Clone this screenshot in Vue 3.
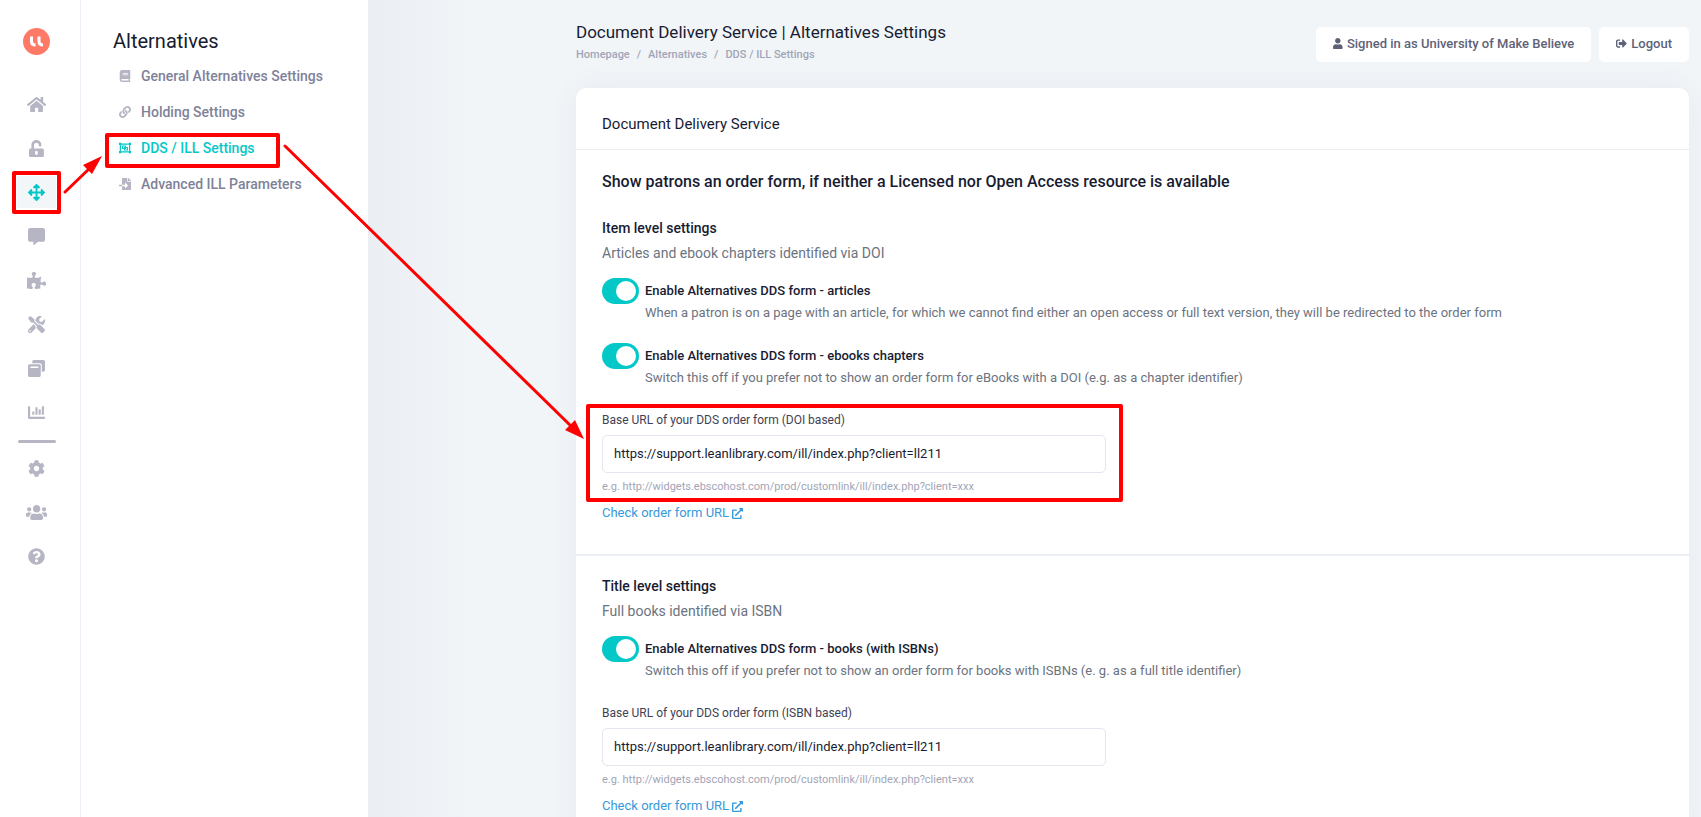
<script setup>
import { ref } from 'vue'

const railItems = [
    { name: 'Home', icon: 'home' },
    { name: 'Access', icon: 'unlock' },
    { name: 'Alternatives', icon: 'arrows', active: true },
    { name: 'Messages', icon: 'comment' },
    { name: 'Extensions', icon: 'puzzle' },
    { name: 'Tools', icon: 'tools' },
    { name: 'Collections', icon: 'books' },
    { name: 'Statistics', icon: 'chart' },
]

const railBottom = [
    { name: 'Settings', icon: 'cog' },
    { name: 'Users', icon: 'users' },
    { name: 'Help', icon: 'question' },
]

const menu = [
    { label: 'General Alternatives Settings', icon: 'book' },
    { label: 'Holding Settings', icon: 'link' },
    { label: 'DDS / ILL Settings', icon: 'group', active: true },
    { label: 'Advanced ILL Parameters', icon: 'import' },
]

const icons = {
    home: { box: '0 0 576 512', d: 'M280.37 148.26L96 300.11V464a16 16 0 0 0 16 16l112.06-.29a16 16 0 0 0 15.92-16V368a16 16 0 0 1 16-16h64a16 16 0 0 1 16 16v95.64a16 16 0 0 0 16 16.05L464 480a16 16 0 0 0 16-16V300L295.67 148.26a12.19 12.19 0 0 0-15.3 0zM571.6 251.47L488 182.56V44.05a12 12 0 0 0-12-12h-56a12 12 0 0 0-12 12v72.61L318.47 43a48 48 0 0 0-61 0L4.34 251.47a12 12 0 0 0-1.6 16.9l25.5 31A12 12 0 0 0 45.15 301l235.22-193.74a12.19 12.19 0 0 1 15.3 0L530.9 301a12 12 0 0 0 16.9-1.6l25.5-31a12 12 0 0 0-1.7-16.93z' },
    unlock: { box: '0 0 448 512', d: 'M400 256H152V152.9c0-39.6 31.7-72.5 71.3-72.9 40-.4 72.7 32.1 72.7 72v16c0 13.3 10.7 24 24 24h32c13.3 0 24-10.7 24-24v-16C376 68 307.5-.3 223.5 0 139.5.3 72 69.5 72 153.5V256H48c-26.5 0-48 21.5-48 48v160c0 26.5 21.5 48 48 48h352c26.5 0 48-21.5 48-48V304c0-26.5-21.5-48-48-48zM264 408c0 22.1-17.9 40-40 40s-40-17.9-40-40v-48c0-22.1 17.9-40 40-40s40 17.9 40 40v48z' },
    arrows: { box: '0 0 512 512', d: 'M352.2 425.8l-79.2 79.2c-9.4 9.4-24.6 9.4-33.9 0l-79.2-79.2c-15.1-15.1-4.4-41 17-41h51.1L228 284H127.2v51.2c0 21.4-25.9 32.1-41 17L7 272.9c-9.4-9.4-9.4-24.6 0-33.9l79.2-79.2c15.1-15.1 41-4.4 41 17V228H228V127.2h-51.2c-21.4 0-32.1-25.9-17-41L239 7c9.4-9.4 24.6-9.4 33.9 0l79.2 79.2c15.1 15.1 4.4 41-17 41H284V228h100.8v-51.2c0-21.4 25.9-32.1 41-17L505 239c9.4 9.4 9.4 24.6 0 33.9l-79.2 79.3c-15.1 15.1-41 4.4-41-17V284H284v100.8h51.2c21.4 0 32.1 25.9 17 41z' },
    comment: { box: '0 0 512 512', d: 'M448 0H64C28.7 0 0 28.7 0 64v288c0 35.3 28.7 64 64 64h96v84c0 9.8 11.2 15.5 19.1 9.7L304 416h144c35.3 0 64-28.7 64-64V64c0-35.3-28.7-64-64-64z' },
    puzzle: { box: '0 0 576 512', d: 'M519.442 288.651c-41.519 0-59.5 31.593-82.058 31.593C377.409 320.244 432 144 432 144s-196.288 80-196.288-3.297c0-35.827 36.288-46.25 36.288-85.985C272 19.216 243.885 0 210.539 0c-34.654 0-66.366 18.891-66.366 56.346 0 41.364 31.711 59.277 31.711 81.75C175.885 207.719 0 166.758 0 166.758v333.237s178.635 41.047 178.635-28.662c0-22.473-40-40.107-40-81.471 0-37.456 29.25-56.346 63.577-56.346 33.673 0 61.788 19.216 61.788 54.717 0 39.735-36.288 50.158-36.288 85.985 0 60.803 129.675 25.73 181.23 25.73 0 0-34.725-120.101 25.827-120.101 35.962 0 46.423 36.152 86.308 36.152C556.712 416 576 387.99 576 354.443c0-34.199-18.962-65.792-56.558-65.792z' },
    tools: { box: '0 0 512 512', d: 'M501.1 395.7L384 278.6c-23.1-23.1-57.6-27.6-85.4-13.9L192 158.1V96L64 0 0 64l96 128h62.1l106.6 106.6c-13.6 27.8-9.2 62.3 13.9 85.4l117.1 117.1c14.6 14.6 38.2 14.6 52.7 0l52.7-52.7c14.5-14.6 14.5-38.2 0-52.7zM331.7 225c28.3 0 54.9 11 74.9 31l19.4 19.4c15.8-6.9 30.8-16.5 43.8-29.5 37.1-37.1 49.7-89.3 37.9-136.7-2.2-9-13.5-12.1-20.1-5.5l-74.4 74.4-67.9-11.3L334 98.900l74.4-74.4c6.6-6.6 3.4-17.9-5.7-20.2-47.4-11.7-99.6.9-136.6 37.9-28.5 28.5-41.9 66.1-41.2 103.6l82.1 82.1c8.1-1.9 16.5-2.9 24.7-2.9zm-103.9 82l-56.7-56.7L18.7 402.8c-25 25-25 65.5 0 90.5s65.5 25 90.5 0l123.6-123.6c-7.6-19.9-9.9-41.6-5-62.7zM64 472c-13.2 0-24-10.8-24-24 0-13.3 10.7-24 24-24s24 10.7 24 24c0 13.2-10.7 24-24 24z' },
    books: { box: '0 0 512 512', d: 'M176 0h288c26 0 48 22 48 48v256c0 26-22 48-48 48h-48V160c0-36-28-64-64-64H128V48c0-26 22-48 48-48zM48 128h288c26 0 48 22 48 48v288c0 26-22 48-48 48H48c-26 0-48-22-48-48V176c0-26 22-48 48-48zm24 64v48h240v-48z' },
    chart: { box: '0 0 512 512', d: 'M332.8 320h38.4c6.4 0 12.8-6.4 12.8-12.8V172.8c0-6.4-6.4-12.8-12.8-12.8h-38.4c-6.4 0-12.8 6.4-12.8 12.8v134.4c0 6.4 6.4 12.8 12.8 12.8zm96 0h38.4c6.4 0 12.8-6.4 12.8-12.8V76.8c0-6.4-6.4-12.8-12.8-12.8h-38.4c-6.4 0-12.8 6.4-12.8 12.8v230.4c0 6.4 6.4 12.8 12.8 12.8zm-288 0h38.4c6.4 0 12.8-6.4 12.8-12.8v-70.4c0-6.4-6.4-12.8-12.8-12.8h-38.4c-6.4 0-12.8 6.4-12.8 12.8v70.4c0 6.4 6.4 12.8 12.8 12.8zm96 0h38.4c6.4 0 12.8-6.4 12.8-12.8V108.8c0-6.4-6.4-12.8-12.8-12.8h-38.4c-6.4 0-12.8 6.4-12.8 12.8v198.4c0 6.4 6.4 12.8 12.8 12.8zM496 384H64V80c0-8.8-7.200-16-16-16H16C7.2 64 0 71.2 0 80v336c0 17.7 14.3 32 32 32h464c8.8 0 16-7.2 16-16v-32c0-8.8-7.2-16-16-16z' },
    cog: { box: '0 0 512 512', d: 'M487.4 315.7l-42.6-24.6c4.3-23.2 4.3-47 0-70.2l42.6-24.6c4.9-2.8 7.1-8.6 5.5-14-11.1-35.6-30-67.8-54.7-94.6-3.8-4.1-10-5.1-14.8-2.3L380.8 110c-17.9-15.4-38.5-27.3-60.8-35.1V25.8c0-5.6-3.9-10.5-9.4-11.7-36.7-8.2-74.3-7.8-109.2 0-5.5 1.2-9.4 6.1-9.4 11.7V75c-22.2 7.9-42.8 19.8-60.8 35.1L88.7 85.5c-4.9-2.8-11-1.9-14.8 2.3-24.7 26.7-43.6 58.9-54.7 94.6-1.7 5.4.6 11.2 5.5 14L67.3 221c-4.3 23.2-4.3 47 0 70.2l-42.6 24.6c-4.9 2.8-7.1 8.6-5.5 14 11.1 35.6 30 67.8 54.7 94.6 3.8 4.1 10 5.1 14.8 2.3l42.6-24.6c17.9 15.4 38.5 27.3 60.8 35.1v49.2c0 5.6 3.9 10.5 9.4 11.7 36.7 8.2 74.3 7.8 109.2 0 5.5-1.2 9.4-6.1 9.4-11.7v-49.2c22.2-7.9 42.8-19.8 60.8-35.1l42.6 24.6c4.9 2.8 11 1.9 14.8-2.3 24.7-26.7 43.6-58.9 54.7-94.6 1.5-5.5-.7-11.3-5.6-14.1zM256 336c-44.1 0-80-35.9-80-80s35.9-80 80-80 80 35.9 80 80-35.9 80-80 80z' },
    users: { box: '0 0 640 512', d: 'M96 224c35.3 0 64-28.7 64-64s-28.7-64-64-64-64 28.7-64 64 28.7 64 64 64zm448 0c35.3 0 64-28.7 64-64s-28.7-64-64-64-64 28.7-64 64 28.7 64 64 64zm32 32h-64c-17.6 0-33.5 7.1-45.1 18.6 40.3 22.1 68.9 62 75.1 109.4h66c17.7 0 32-14.3 32-32v-32c0-35.3-28.7-64-64-64zm-256 0c61.9 0 112-50.1 112-112S381.9 32 320 32 208 82.1 208 144s50.1 112 112 112zm76.8 32h-8.3c-20.8 10-43.9 16-68.5 16s-47.6-6-68.5-16h-8.3C179.6 288 128 339.6 128 403.2V432c0 26.5 21.5 48 48 48h288c26.5 0 48-21.5 48-48v-28.8c0-63.6-51.6-115.2-115.2-115.2zm-223.7-13.4C161.5 263.1 145.6 256 128 256H64c-35.3 0-64 28.7-64 64v32c0 17.7 14.3 32 32 32h65.9c6.3-47.4 34.9-87.3 75.2-109.4z' },
    question: { box: '0 0 512 512', d: 'M504 256c0 137-111 248-248 248S8 393 8 256C8 119.100 119 8 256 8s248 111.100 248 248zM262.655 90c-54.497 0-89.255 22.957-116.549 63.758-3.536 5.286-2.353 12.415 2.715 16.258l34.699 26.31c5.205 3.947 12.621 3.008 16.665-2.122 17.864-22.658 30.113-35.797 57.303-35.797 20.429 0 45.698 13.148 45.698 32.958 0 14.976-12.363 22.667-32.534 33.976C247.128 238.528 216 254.941 216 296v4c0 6.627 5.373 12 12 12h56c6.627 0 12-5.373 12-12v-1.333c0-28.462 83.186-29.647 83.186-106.667 0-58.002-60.165-102-116.531-102zM256 338c-25.365 0-46 20.635-46 46 0 25.364 20.635 46 46 46s46-20.636 46-46c0-25.365-20.635-46-46-46z' },
    book: { box: '0 0 448 512', d: 'M448 360V24c0-13.3-10.7-24-24-24H96C43 0 0 43 0 96v320c0 53 43 96 96 96h328c13.3 0 24-10.7 24-24v-16c0-7.5-3.5-14.3-8.9-18.7-4.2-15.4-4.2-59.3 0-74.7 5.4-4.3 8.9-11.1 8.9-18.6zM128 134c0-3.3 2.7-6 6-6h212c3.3 0 6 2.7 6 6v20c0 3.3-2.7 6-6 6H134c-3.3 0-6-2.7-6-6v-20zm0 64c0-3.3 2.7-6 6-6h212c3.3 0 6 2.7 6 6v20c0 3.3-2.7 6-6 6H134c-3.3 0-6-2.7-6-6v-20zm253.4 250H96c-17.7 0-32-14.3-32-32 0-17.6 14.4-32 32-32h285.4c-1.9 17.1-1.9 46.9 0 64z' },
    link: { box: '0 0 512 512', d: 'M326.612 185.391c59.747 59.809 58.927 155.698.36 214.59-.11.12-.24.25-.36.37l-67.2 67.2c-59.27 59.27-155.699 59.262-214.96 0-59.27-59.26-59.27-155.7 0-214.96l37.106-37.106c9.84-9.84 26.786-3.3 27.294 10.606.648 17.722 3.826 35.527 9.69 52.721 1.986 5.822.567 12.262-3.783 16.612l-13.087 13.087c-28.026 28.026-28.905 73.66-1.155 101.96 28.024 28.579 74.086 28.749 102.325.51l67.2-67.19c28.191-28.191 28.073-73.757 0-101.83-3.701-3.694-7.429-6.564-10.341-8.569a16.037 16.037 0 0 1-6.947-12.606c-.396-10.567 3.348-21.456 11.698-29.806l21.054-21.055c5.521-5.521 14.182-6.199 20.584-1.731a152.482 152.482 0 0 1 20.522 17.197zM467.547 44.449c-59.261-59.262-155.69-59.27-214.96 0l-67.2 67.2c-.12.12-.25.25-.36.37-58.566 58.892-59.387 154.781.36 214.59a152.454 152.454 0 0 0 20.521 17.196c6.402 4.468 15.064 3.789 20.584-1.731l21.054-21.055c8.35-8.35 12.094-19.239 11.698-29.806a16.037 16.037 0 0 0-6.947-12.606c-2.912-2.005-6.64-4.875-10.341-8.569-28.073-28.073-28.191-73.639 0-101.83l67.2-67.19c28.239-28.239 74.3-28.069 102.325.51 27.75 28.3 26.872 73.934-1.155 101.96l-13.087 13.087c-4.35 4.35-5.769 10.79-3.783 16.612 5.864 17.194 9.042 34.999 9.69 52.721.509 13.906 17.454 20.446 27.294 10.606l37.106-37.106c59.271-59.259 59.271-155.699.001-214.959z' },
    group: { box: '0 0 512 512', d: 'M0 32h96v32h320V32h96v96h-32v256h32v96h-96v-32H96v32H0v-96h32V128H0zM84 116v280h344V116zM128 150h180v60h76v152H204v-60h-76zM168 190v72h36v-52h64v-20zM308 250v52h-64v20h100v-72z' },
    import: { box: '0 0 512 512', d: 'M16 288c-8.8 0-16 7.2-16 16v32c0 8.8 7.2 16 16 16h112v-64zm489-183L407.1 7c-4.5-4.5-10.6-7-17-7H384v128h128v-6.1c0-6.3-2.5-12.4-7-16.9zm-153 31V0H152c-13.3 0-24 10.7-24 24v264h128v-65.2c0-14.3 17.3-21.4 27.4-11.3L379 308c6.6 6.7 6.6 17.4 0 24l-95.7 96.4c-10.1 10.1-27.4 3-27.4-11.3V352H128v136c0 13.3 10.7 24 24 24h336c13.3 0 24-10.7 24-24V160H376c-13.2 0-24-10.8-24-24z' },
    user: { box: '0 0 448 512', d: 'M224 256c70.7 0 128-57.3 128-128S294.7 0 224 0 96 57.3 96 128s57.3 128 128 128zm89.6 32h-16.7c-22.2 10.2-46.9 16-72.9 16s-50.6-5.8-72.9-16h-16.7C60.2 288 0 348.2 0 422.4V464c0 26.5 21.5 48 48 48h352c26.5 0 48-21.5 48-48v-41.6c0-74.2-60.2-134.4-134.4-134.4z' },
    logout: { box: '0 0 512 512', d: 'M497 273L329 441c-15 15-41 4.5-41-17v-96H152c-13.3 0-24-10.7-24-24v-96c0-13.3 10.7-24 24-24h136V88c0-21.4 25.9-32 41-17l168 168c9.3 9.4 9.3 24.6 0 34zM192 436v-40c0-6.6-5.4-12-12-12H96c-17.7 0-32-14.3-32-32V160c0-17.7 14.3-32 32-32h84c6.6 0 12-5.4 12-12V76c0-6.6-5.4-12-12-12H96c-53 0-96 43-96 96v192c0 53 43 96 96 96h84c6.6 0 12-5.4 12-12z' },
    external: { box: '0 0 512 512', d: 'M432 320h-32a16 16 0 0 0-16 16v112H64V128h144a16 16 0 0 0 16-16V80a16 16 0 0 0-16-16H48a48 48 0 0 0-48 48v352a48 48 0 0 0 48 48h352a48 48 0 0 0 48-48V336a16 16 0 0 0-16-16zM488 0H360c-21.4 0-32 25.9-17 41l35.7 35.7L135 320.4a24 24 0 0 0 0 34L157.700 377a24 24 0 0 0 34 0l243.600-243.700L471 169c15 15 41 4.500 41-17V24a24 24 0 0 0-24-24z' },
}

const sections = ref([
    {
        id: 'item',
        heading: 'Item level settings',
        note: 'Articles and ebook chapters identified via DOI',
        switches: [
            {
                id: 'articles',
                on: true,
                label: 'Enable Alternatives DDS form - articles',
                help: 'When a patron is on a page with an article, for which we cannot find either an open access or full text version, they will be redirected to the order form',
            },
            {
                id: 'chapters',
                on: true,
                label: 'Enable Alternatives DDS form - ebooks chapters',
                help: 'Switch this off if you prefer not to show an order form for eBooks with a DOI (e.g. as a chapter identifier)',
            },
        ],
        urlLabel: 'Base URL of your DDS order form (DOI based)',
        url: 'https://support.leanlibrary.com/ill/index.php?client=ll211',
    },
    {
        id: 'title',
        heading: 'Title level settings',
        note: 'Full books identified via ISBN',
        switches: [
            {
                id: 'books',
                on: true,
                label: 'Enable Alternatives DDS form - books (with ISBNs)',
                help: 'Switch this off if you prefer not to show an order form for books with ISBNs (e. g. as a full title identifier)',
            },
        ],
        urlLabel: 'Base URL of your DDS order form (ISBN based)',
        url: 'https://support.leanlibrary.com/ill/index.php?client=ll211',
    },
])
</script>

<template>
    <div class="page">
        <nav class="rail" aria-label="Main">
            <a href="#" class="logo" aria-label="Lean Library">
                <svg viewBox="0 0 27 27">
                    <circle cx="13.5" cy="13.5" r="13.5" fill="#ff7a66" />
                    <path d="M8.5 8.5v5q0 3.500 4 3.500M16 8.500v5q0 3.500 4 3.500" fill="none" stroke="#fff" stroke-width="3" />
                </svg>
            </a>
            <a v-for="item in railItems" :key="item.icon" href="#" class="rail-link" :class="{ active: item.active }"
                :aria-label="item.name">
                <svg :viewBox="icons[item.icon].box"><path :d="icons[item.icon].d" fill-rule="evenodd" /></svg>
            </a>
            <hr class="rail-line">
            <a v-for="item in railBottom" :key="item.icon" href="#" class="rail-link" :aria-label="item.name">
                <svg :viewBox="icons[item.icon].box"><path :d="icons[item.icon].d" fill-rule="evenodd" /></svg>
            </a>
        </nav>

        <aside class="side">
            <h2>Alternatives</h2>
            <a v-for="item in menu" :key="item.icon" href="#" class="side-link" :class="{ active: item.active }">
                <svg :viewBox="icons[item.icon].box"><path :d="icons[item.icon].d" fill-rule="evenodd" /></svg>
                <span>{{ item.label }}</span>
            </a>
        </aside>

        <main class="main">
            <header class="top">
                <div>
                    <h1>Document Delivery Service | Alternatives Settings</h1>
                    <div class="crumbs">
                        <a href="#">Homepage</a>
                        <span>/</span>
                        <a href="#">Alternatives</a>
                        <span>/</span>
                        <a href="#">DDS / ILL Settings</a>
                    </div>
                </div>
                <div class="account">
                    <button type="button">
                        <svg :viewBox="icons.user.box"><path :d="icons.user.d" /></svg>
                        Signed in as University of Make Believe
                    </button>
                    <button type="button">
                        <svg :viewBox="icons.logout.box"><path :d="icons.logout.d" /></svg>
                        Logout
                    </button>
                </div>
            </header>

            <div class="card">
                <h3 class="card-title">Document Delivery Service</h3>
                <h4 class="lead">Show patrons an order form, if neither a Licensed nor Open Access resource is available</h4>
                <section v-for="s in sections" :key="s.id" class="section">
                    <h5>{{ s.heading }}</h5>
                    <p class="note">{{ s.note }}</p>
                    <div v-for="sw in s.switches" :key="sw.id" class="switch-row">
                        <input :id="sw.id" v-model="sw.on" type="checkbox" class="switch">
                        <div>
                            <label :for="sw.id">{{ sw.label }}</label>
                            <p>{{ sw.help }}</p>
                        </div>
                    </div>
                    <div class="field">
                        <label :for="s.id + '-url'">{{ s.urlLabel }}</label>
                        <input :id="s.id + '-url'" v-model="s.url" type="text">
                        <small>e.g. http://widgets.ebscohost.com/prod/customlink/ill/index.php?client=xxx</small>
                        <a :href="s.url" class="check">
                            Check order form URL
                            <svg :viewBox="icons.external.box"><path :d="icons.external.d" /></svg>
                        </a>
                    </div>
                </section>
            </div>
        </main>

        <!-- walkthrough marks drawn over the page -->
        <svg class="marks" width="1200" height="600" aria-hidden="true">
            <g fill="none" stroke="#f00" stroke-width="3" stroke-linejoin="round">
                <rect x="14" y="173" width="45" height="39" stroke-width="4" />
                <rect x="107" y="135" width="171" height="31" stroke-width="4" />
                <rect x="588" y="406" width="533" height="94" stroke-width="4" />
                <path d="M65 192L90 168M285 146L572 427" stroke-linecap="round" />
            </g>
            <path d="M102 156L83 165L92 174ZM584 439L565 430L575 420Z" fill="#f00" />
        </svg>
    </div>
</template>

<style>
html,
body {
    height: 100%;
    overflow: hidden;
}
</style>

<style scoped>
.page {
    position: relative;
    display: flex;
    height: 100vh;
    overflow: hidden;
    background: #f1f5f8;
    color: #181c32;
    font-family: Roboto, "Liberation Sans", sans-serif;
    font-size: 13px;
}

h1, h2, h3, h4, h5, p {
    margin: 0;
    font-weight: 500;
}

h1, h2, h3 {
    font-weight: 400;
}

a {
    text-decoration: none;
}

svg {
    fill: currentColor;
}

.rail {
    display: flex;
    flex-direction: column;
    align-items: center;
    flex: 0 0 81px;
    box-sizing: border-box;
    padding: 28px 7px 0 0;
    border-right: 1px solid #eef0f7;
    background: #fff;
}

.logo {
    height: 27px;
    margin-bottom: 33px;
}

.logo svg {
    display: block;
    width: 27px;
    height: 27px;
}

.rail-link {
    display: flex;
    align-items: center;
    justify-content: center;
    width: 39px;
    height: 32px;
    margin-bottom: 12px;
    color: #b5b5c3;
}

.rail-link svg {
    height: 17px;
}

.rail-link.active {
    color: #04c8c8;
    background: #f3f6f9;
}

.rail-line {
    width: 38px;
    height: 3px;
    margin: 0 0 9px;
    border: 0;
    border-radius: 2px;
    background: #b5b5c3;
}

.side {
    flex: 0 0 287px;
    box-sizing: border-box;
    padding: 28px 0 0 32px;
    background: #fff;
}

.side h2 {
    margin-bottom: 10px;
    font-size: 20px;
    line-height: 26px;
}

.side-link {
    display: flex;
    align-items: center;
    height: 24px;
    margin-bottom: 12px;
    padding-left: 6px;
    color: #7e8299;
    font-size: 14px;
    font-weight: 500;
}

.side-link svg {
    width: 12px;
    height: 12px;
    margin-right: 10px;
    color: #b5b5c3;
}

.side-link.active,
.side-link.active svg {
    color: #04c8c8;
}

.main {
    flex: 1;
    min-width: 0;
    padding: 20px 12px 0 208px;
    background: linear-gradient(90deg, #ebeff4, #f1f5f8 110px);
}

.top {
    display: flex;
    justify-content: space-between;
    height: 68px;
}

h1 {
    font-size: 17px;
    line-height: 24px;
}

.crumbs {
    display: flex;
    gap: 7px;
    font-size: 11px;
    font-weight: 500;
    line-height: 22px;
}

.crumbs,
.crumbs a {
    color: #a1a5b7;
}

.account {
    display: flex;
    align-items: flex-start;
    gap: 8px;
    padding-top: 7px;
}

.account button {
    display: flex;
    align-items: center;
    gap: 4px;
    height: 35px;
    padding: 0 17px 2px;
    border: 0;
    border-radius: 5px;
    background: #fff;
    color: #5e6278;
    font: 500 13px Roboto, "Liberation Sans", sans-serif;
}

.account svg {
    height: 11px;
}

.card {
    border-radius: 10px;
    background: #fff;
    box-shadow: 0 0 30px rgba(82, 63, 105, .06);
}

.card-title {
    padding: 24px 26px 13px;
    border-bottom: 1px solid #ebedf0;
    font-size: 15px;
    line-height: 24px;
}

.lead {
    padding: 20px 26px 0;
    font-size: 16px;
    line-height: 24px;
}

.section {
    padding: 22px 26px 30px;
}

.section + .section {
    border-top: 2px solid #ebeff4;
    padding-top: 18px;
}

h5 {
    font-size: 14px;
    line-height: 24px;
}

.note {
    color: #6c7380;
    font-size: 14px;
    font-weight: 400;
    line-height: 26px;
}

.switch-row {
    display: flex;
    gap: 6px;
    height: 53px;
    margin-top: 12px;
}

.switch {
    appearance: none;
    flex: none;
    box-sizing: border-box;
    width: 37px;
    height: 26px;
    margin: 0;
    padding: 3px;
    border-radius: 13px;
    background: #d6d9e3;
}

.switch::before {
    content: "";
    display: block;
    width: 20px;
    height: 20px;
    border-radius: 50%;
    background: #fff;
}

.switch:checked {
    background: #04c8c8;
}

.switch:checked::before {
    margin-left: 11px;
}

.switch-row label {
    font-weight: 500;
    line-height: 26px;
}

.switch-row p {
    color: #6c7380;
    font-weight: 400;
    line-height: 18px;
}

.field {
    display: flex;
    flex-direction: column;
    align-items: flex-start;
    max-width: 504px;
    margin-top: 14px;
}

.field label {
    color: #3f4254;
    font-size: 12px;
    line-height: 20px;
}

.field input {
    width: 100%;
    height: 38px;
    box-sizing: border-box;
    margin: 5px 0 6px;
    padding: 0 11px 2px;
    border: 1px solid #e4e6ef;
    border-radius: 5px;
    color: #181c32;
    font: 400 13px Roboto, "Liberation Sans", sans-serif;
}

.field small {
    color: #a1a5b7;
    font-size: 11px;
    line-height: 16px;
}

.check {
    display: flex;
    align-items: center;
    gap: 3px;
    margin-top: 7px;
    color: #3699db;
    line-height: 22px;
}

.check svg {
    width: 11px;
}

.marks {
    position: absolute;
    top: 0;
    left: 0;
    pointer-events: none;
}
</style>
